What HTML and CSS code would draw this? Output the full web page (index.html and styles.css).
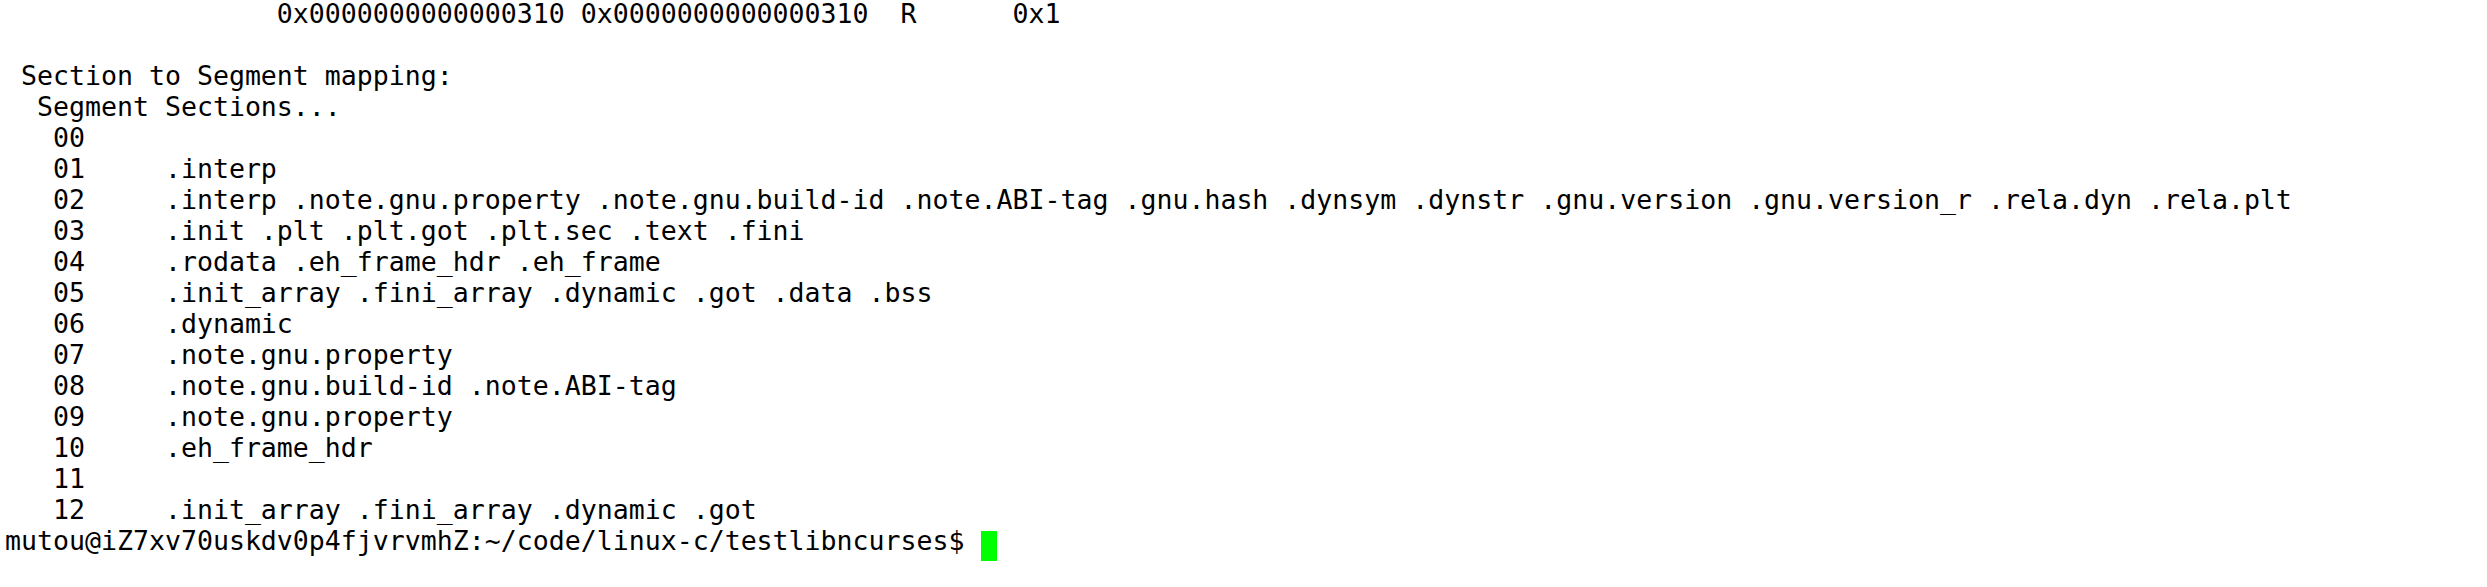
FILE: index.html
```html
<!DOCTYPE html>
<html>
<head>
<meta charset="utf-8">
<link rel="stylesheet" href="styles.css">
</head>
<body>
<pre class="term">                 0x0000000000000310 0x0000000000000310  R      0x1

 Section to Segment mapping:
  Segment Sections...
   00     
   01     .interp 
   02     .interp .note.gnu.property .note.gnu.build-id .note.ABI-tag .gnu.hash .dynsym .dynstr .gnu.version .gnu.version_r .rela.dyn .rela.plt 
   03     .init .plt .plt.got .plt.sec .text .fini 
   04     .rodata .eh_frame_hdr .eh_frame 
   05     .init_array .fini_array .dynamic .got .data .bss 
   06     .dynamic 
   07     .note.gnu.property 
   08     .note.gnu.build-id .note.ABI-tag 
   09     .note.gnu.property 
   10     .eh_frame_hdr 
   11     
   12     .init_array .fini_array .dynamic .got 
mutou@iZ7xv70uskdv0p4fjvrvmhZ:~/code/linux-c/testlibncurses$ <span class="cursor"> </span></pre>
</body>
</html>
```
FILE: styles.css
```css
html, body {
  margin: 0;
  padding: 0;
  background: #ffffff;
}
.term {
  margin: -2px 0 0 5px;
  font-family: "DejaVu Sans Mono", monospace;
  font-size: 26.575px;
  line-height: 31px;
  color: #000000;
  white-space: pre;
}
.cursor {
  display: inline-block;
  width: 16px;
  height: 30px;
  background: #00ff00;
  vertical-align: -6px;
}
```
